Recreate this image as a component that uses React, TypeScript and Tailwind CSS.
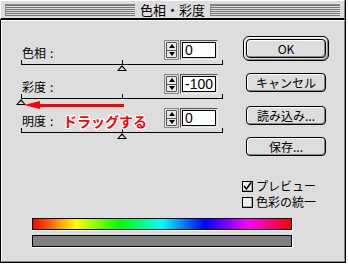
import React from "react";

const font = "font-['Noto_Sans_CJK_JP','Liberation_Sans',sans-serif]";

const Stripes = () => (
  <div className="flex-1 flex flex-col gap-px border-l border-t border-[#888] border-r-white border-b-white">
    {[0, 1, 2, 3, 4, 5].map((i) => (
      <div key={i} className="h-px bg-[#777]" />
    ))}
  </div>
);

const SpinBox = ({ value }: { value: string }) => (
  <div className="flex h-[20px] w-[54px]">
    <div className="w-[15px] flex flex-col border border-[#888] bg-[#ddd] p-px">
      <div className="flex-1 flex flex-col border border-[#555] bg-[#e8e8e8] rounded-[1px]">
        <div className="flex-1 flex items-center justify-center border-b border-[#555]">
          <div className="w-0 h-0 border-l-[3px] border-r-[3px] border-b-[4px] border-l-transparent border-r-transparent border-b-black" />
        </div>
        <div className="flex-1 flex items-center justify-center">
          <div className="w-0 h-0 border-l-[3px] border-r-[3px] border-t-[4px] border-l-transparent border-r-transparent border-t-black" />
        </div>
      </div>
    </div>
    <div className="flex-1 ml-px border border-[#555] border-b-[#eee] border-r-[#eee] p-px">
      <div className="h-full bg-white border border-black flex items-center pl-[2px] text-[14px] leading-none font-['Liberation_Sans',sans-serif] text-black">
        {value}
      </div>
    </div>
  </div>
);

const Slider = ({ pos }: { pos: number }) => (
  <div className="relative w-[202px] h-[11px]">
    <div className="flex justify-between h-[4px] w-full">
      <div className="w-px h-full bg-black" />
      <div className="w-px h-full bg-black" />
      <div className="w-px h-full bg-black" />
    </div>
    <div className="h-px w-full bg-black" />
    <div
      className="absolute top-[5px] w-0 h-0 border-l-[5px] border-r-[5px] border-b-[6px] border-l-transparent border-r-transparent border-b-black"
      style={{ left: pos - 5 }}
    />
    <div
      className="absolute top-[7px] w-0 h-0 border-l-[3px] border-r-[3px] border-b-[3px] border-l-transparent border-r-transparent border-b-[#ddd]"
      style={{ left: pos - 3 }}
    />
  </div>
);

const Row = ({ label, value, pos }: { label: string; value: string; pos: number }) => (
  <div className="flex flex-col">
    <div className="flex items-center justify-between w-[197px] h-[20px]">
      <span className="text-[12px] leading-none mt-[6px] ml-px">
        {label}
        <span className="ml-[4px]">:</span>
      </span>
      <SpinBox value={value} />
    </div>
    <Slider pos={pos} />
  </div>
);

const Button = ({ label, primary }: { label: string; primary?: boolean }) => {
  const inner = (
    <div className="w-[80px] h-[19px] flex items-center justify-center rounded-[4px] border border-black bg-[#ddd] shadow-[inset_1px_1px_0_#fff,inset_-1px_-1px_0_#888] text-[12px] leading-none">
      {label}
    </div>
  );
  if (!primary) return inner;
  return (
    <div className="p-[2px] rounded-[6px] border border-black bg-[#ddd] shadow-[inset_1px_1px_0_#fff,inset_-1px_-1px_0_#888]">
      {inner}
    </div>
  );
};

const Checkbox = ({ label, checked }: { label: string; checked?: boolean }) => (
  <div className="flex items-center gap-[3px] h-[14px]">
    <div className="w-[11px] h-[11px] border border-black bg-[#eee] shadow-[inset_-1px_-1px_0_#aaa] flex items-center justify-center">
      {checked && (
        <svg width="9" height="9" viewBox="0 0 9 9">
          <path d="M1 4 L3.5 7 L8 0.5" stroke="#000" strokeWidth="1.6" fill="none" />
        </svg>
      )}
    </div>
    <span className="text-[12px] leading-none">{label}</span>
  </div>
);

const Bar = ({ rainbow }: { rainbow?: boolean }) => (
  <div className="w-[261px] border-b border-r border-white">
    <div
      className={
        "h-[12px] border border-black " +
        (rainbow
          ? "bg-[linear-gradient(to_right,#f00,#ff0,#0f0,#0ff,#00f,#f0f,#f00)]"
          : "bg-[#808080]")
      }
    />
  </div>
);

export default function App() {
  return (
    <div className={`w-[348px] h-[264px] bg-white text-black ${font}`}>
      <div className="w-[346px] h-[263px] border-b border-r border-black flex flex-col bg-[#ddd]">
        {/* title */}
        <div className="h-[20px] flex items-center gap-[3px] px-[4px] border-t border-l border-white border-r-[#888] border-r border-b-2 border-b-black">
          <Stripes />
          <span className="text-[13px] leading-none px-[2px]">色相・彩度</span>
          <Stripes />
        </div>
        {/* body */}
        <div className="flex-1 flex flex-col border-l border-black relative">
          <div className="flex-1 flex flex-col border-l border-t border-white border-r border-r-[#888] border-b border-b-[#888]">
            <div className="flex">
              <div className="flex flex-col gap-[3px] pl-[19px] pt-[19px]">
                <Row label="色相" value="0" pos={101} />
                <Row label="彩度" value="-100" pos={0} />
                <Row label="明度" value="0" pos={101} />
              </div>
              <div className="flex flex-col items-start ml-[20px] pt-[15px]">
                <Button label="OK" primary />
                <div className="flex flex-col gap-[14px] mt-[12px] ml-[3px]">
                  <Button label="キャンセル" />
                  <div className="h-[4px]" />
                </div>
                <div className="flex flex-col gap-[12px] -mt-[4px] ml-[3px]">
                  <Button label="読み込み..." />
                  <Button label="保存..." />
                </div>
                <div className="flex flex-col gap-[2px] mt-[23px] ml-[-1px]">
                  <Checkbox label="プレビュー" checked />
                  <Checkbox label="色彩の統一" />
                </div>
              </div>
            </div>
            <div className="flex flex-col gap-[4px] pl-[30px] mt-[9px]">
              <Bar rainbow />
              <Bar />
            </div>
          </div>
          {/* overlay annotation */}
          <div className="absolute left-[23px] top-[81px] flex items-center">
            <div className="w-0 h-0 border-t-[4px] border-b-[4px] border-r-[16px] border-t-transparent border-b-transparent border-r-[#f00]" />
            <div className="w-[84px] h-[3px] bg-[#f00]" />
          </div>
          <div className="absolute left-[62px] top-[94px] text-[14px] font-bold leading-none text-[#f00] [text-shadow:1px_0_0_#fff,-1px_0_0_#fff,0_1px_0_#fff,0_-1px_0_#fff,1px_1px_0_#fff,-1px_-1px_0_#fff,1px_-1px_0_#fff,-1px_1px_0_#fff]">
            ドラッグする
          </div>
        </div>
      </div>
    </div>
  );
}
